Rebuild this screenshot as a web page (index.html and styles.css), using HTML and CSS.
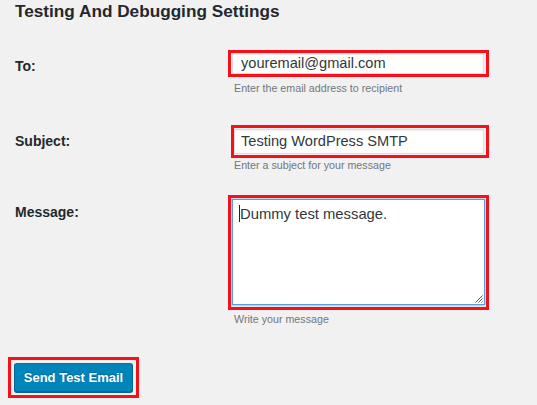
FILE: index.html
```html
<!DOCTYPE html>
<html lang="en">
<head>
<meta charset="utf-8">
<title>Testing And Debugging Settings</title>
<link rel="stylesheet" href="styles.css">
</head>
<body>
<div class="page">
  <h2 class="title">Testing And Debugging Settings</h2>
  <div class="form">
    <div class="row row-to">
      <label class="label">To:</label>
      <div class="field">
        <div class="mark mark-to"><div class="input">youremail@gmail.com</div></div>
        <p class="help help-to">Enter the email address to recipient</p>
      </div>
    </div>
    <div class="row row-subject">
      <label class="label">Subject:</label>
      <div class="field">
        <div class="mark mark-subject"><div class="input">Testing WordPress SMTP</div></div>
        <p class="help help-subject">Enter a subject for your message</p>
      </div>
    </div>
    <div class="row row-message">
      <label class="label label-message">Message:</label>
      <div class="field">
        <div class="mark mark-message">
          <div class="textarea"><span class="caret"></span>Dummy test message.
            <svg class="grip" width="9" height="9" viewBox="0 0 9 9"><path d="M8.5 1.5L1.5 8.5M8.5 4.5L4.5 8.5M8.5 7.5L7.5 8.5" stroke="#555" stroke-width="1" fill="none"/></svg>
          </div>
        </div>
        <p class="help help-message">Write your message</p>
      </div>
    </div>
  </div>
  <div class="mark mark-button"><button class="button">Send Test Email</button></div>
</div>
</body>
</html>
```

FILE: styles.css
```css
html, body {
  margin: 0;
  padding: 0;
  background: #f1f1f1;
}
body {
  font-family: "Liberation Sans", Arial, sans-serif;
  color: #23282d;
}
.page {
  padding: 0 0 0 15px;
}
.title {
  margin: 0;
  font-size: 17.2px;
  line-height: 22px;
  font-weight: 700;
  color: #23282d;
}
.form {
  display: flex;
  flex-direction: column;
}
.row {
  display: grid;
  grid-template-columns: 213px 261px;
  align-items: start;
}
.row-to { margin-top: 28px; }
.row-subject { margin-top: 30px; }
.row-message { margin-top: 23px; }
.label {
  font-size: 14px;
  line-height: 20px;
  font-weight: 700;
  padding-top: 6px;
}
.label-message { padding-top: 7px; }
.mark {
  border: 3px solid #f5101a;
  background: #f1f1f1;
}
.mark-to { padding: 0 2px 0 1px; }
.mark-subject { margin-left: 3px; padding: 1px 2px 1px 0; }
.mark-message { padding: 1px 1px 2px 1px; }
.input {
  background: #fff;
  border: 1px solid #ddd;
  box-shadow: inset 0 1px 2px rgba(0,0,0,.07);
  font-size: 14.6px;
  line-height: 19px;
  padding: 0 0 0 8px;
  color: #32373c;
}
.mark-subject .input { line-height: 23px; padding-left: 6px; }
.textarea {
  position: relative;
  background: #fff;
  border: 1px solid #5b9dd9;
  box-shadow: 0 0 2px rgba(30,140,190,.8);
  font-size: 14.8px;
  line-height: 20px;
  padding: 4px 0 0 6px;
  box-sizing: border-box;
  height: 106px;
  color: #32373c;
}
.caret {
  display: inline-block;
  width: 1px;
  height: 17px;
  background: #222;
  vertical-align: -3px;
}
.grip {
  position: absolute;
  right: 1px;
  bottom: 1px;
}
.help {
  margin: 0;
  font-size: 10.7px;
  line-height: 14px;
  color: #72777c;
  padding-left: 6px;
}
.help-to { margin-top: 4px; }
.help-subject { margin-top: 0; }
.help-message { margin-top: 2px; }
.mark-button {
  display: inline-block;
  margin: 31px 0 0 -7px;
  padding: 3px;
}
.button {
  display: block;
  width: 119px;
  height: 29px;
  background: #0085ba;
  border: 1px solid #0073aa;
  border-color: #0073aa #006799 #006799;
  border-radius: 3px;
  box-shadow: 0 1px 0 #006799;
  color: #fff;
  font-family: "Liberation Sans", Arial, sans-serif;
  font-size: 13px;
  font-weight: 700;
  padding: 0;
  text-shadow: 0 -1px 1px #006799;
}
```
